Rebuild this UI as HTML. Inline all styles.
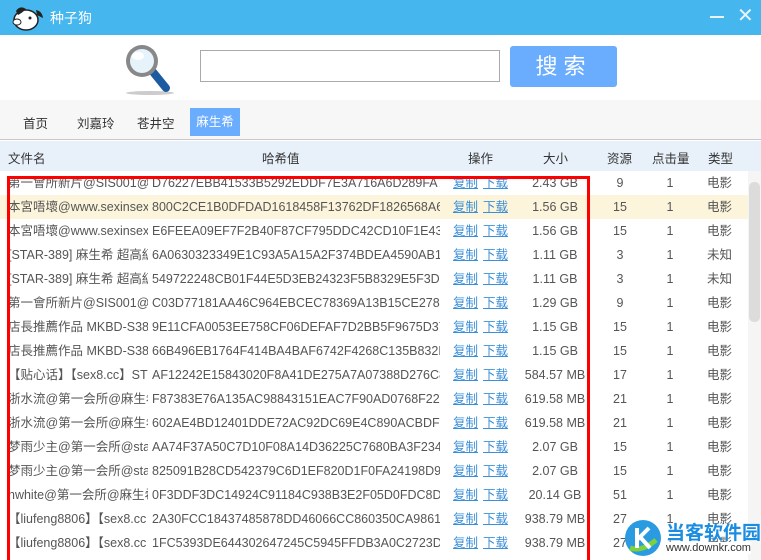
<!DOCTYPE html>
<html style="overflow:hidden;width:761px;height:560px"><head><meta charset="utf-8"><style>
*{margin:0;padding:0;box-sizing:border-box}
body{width:761px;height:560px;overflow:hidden;background:#fff;font-family:"Liberation Sans","Noto Sans CJK SC",sans-serif;font-size:12.5px;color:#555;position:relative}
.a{position:absolute;white-space:nowrap}
.title{left:0;top:0;width:761px;height:35px;background:#45b6ee}
.tabs{left:0;top:100px;width:761px;height:40px;background:#f7f7f7;border-bottom:1px solid #c8c8c8}
.hdr{left:0;top:141px;width:761px;height:30px;background:#e8f1f9}
.row{position:absolute;left:0;width:748px;height:24px;line-height:24px}
.row span{position:absolute;white-space:nowrap;overflow:hidden}
.n{left:8px;width:140px}
.h{left:152px;width:288px}
.o{left:453px;color:#3a8fd8;text-decoration:underline}
.o2{left:483px;color:#3a8fd8;text-decoration:underline}
.s{left:500px;width:110px;text-align:center}
.r{left:600px;width:40px;text-align:center}
.c{left:650px;width:40px;text-align:center}
.t{left:707px}
</style></head><body>
<div class="a title"></div>
<svg class="a" style="left:6px;top:3px" width="40" height="30" viewBox="0 0 40 30">
<ellipse cx="20" cy="17" rx="12" ry="10" fill="#fff" stroke="#222" stroke-width="1.5"/>
<path d="M10 8 Q14 2 20 6 Q16 10 12 12Z" fill="#222"/>
<path d="M30 7 Q36 8 37 15 Q33 13 31 12Z" fill="#222"/>
<ellipse cx="11" cy="19" rx="4" ry="3" fill="#fff" stroke="#222"/>
<circle cx="24" cy="15" r="1.5" fill="#222"/>
</svg>
<div class="a" style="left:50px;top:8px;color:#fff;font-size:14px">种子狗</div>
<div class="a" style="left:710px;top:16px;width:14px;height:2px;background:#e8f4fc"></div>
<div class="a" style="left:737px;top:3px;color:#e8f4fc;font-size:20px">✕</div>
<svg class="a" style="left:122px;top:40px" width="58" height="56" viewBox="0 0 58 56">
<ellipse cx="28" cy="53" rx="24" ry="2" fill="#ccc"/>
<path d="M31 32 L44 48" stroke="#1e5aa0" stroke-width="8" stroke-linecap="round"/>
<circle cx="20" cy="21" r="16" fill="#888"/>
<circle cx="20" cy="21" r="12" fill="#e6f3fb"/>
<ellipse cx="16" cy="16" rx="6" ry="4" fill="#fff"/>
</svg>
<div class="a" style="left:200px;top:50px;width:300px;height:32px;border:1px solid #aaa"></div>
<div class="a" style="left:510px;top:46px;width:107px;height:41px;background:#6aacfd;border-radius:3px;color:#fff;font-size:22px;text-align:center;line-height:41px;letter-spacing:6px">搜索</div>
<div class="a tabs"></div>
<div class="a" style="left:23px;top:113px;color:#333">首页</div>
<div class="a" style="left:77px;top:113px;color:#333">刘嘉玲</div>
<div class="a" style="left:137px;top:113px;color:#333">苍井空</div>
<div class="a" style="left:190px;top:108px;width:50px;height:28px;background:#6aacfd;color:#fff;text-align:center;line-height:28px">麻生希</div>
<div class="a hdr"></div>
<div class="a" style="left:8px;top:148px;color:#333">文件名</div>
<div class="a" style="left:262px;top:148px;color:#333">哈希值</div>
<div class="a" style="left:468px;top:148px;color:#333">操作</div>
<div class="a" style="left:543px;top:148px;color:#333">大小</div>
<div class="a" style="left:607px;top:148px;color:#333">资源</div>
<div class="a" style="left:652px;top:148px;color:#333">点击量</div>
<div class="a" style="left:708px;top:148px;color:#333">类型</div>
<div class="a" style="left:748px;top:171px;width:13px;height:389px;background:#f5f5f5"></div>
<div class="a" style="left:749px;top:182px;width:11px;height:140px;background:#dcdcdc;border-radius:5px"></div>

<div class="row" style="top:171px"><span class="n">第一會所新片@SIS001@(</span><span class="h">D76227EBB41533B5292EDDF7E3A716A6D289FA7B</span><span class="o">复制</span><span class="o2">下载</span><span class="s">2.43 GB</span><span class="r">9</span><span class="c">1</span><span class="t">电影</span></div>
<div class="row" style="top:195px;background:#fcf5dc"><span class="n">本宮唔壞@www.sexinsex.</span><span class="h">800C2CE1B0DFDAD1618458F13762DF1826568A66</span><span class="o">复制</span><span class="o2">下载</span><span class="s">1.56 GB</span><span class="r">15</span><span class="c">1</span><span class="t">电影</span></div>
<div class="row" style="top:219px"><span class="n">本宮唔壞@www.sexinsex.</span><span class="h">E6FEEA09EF7F2B40F87CF795DDC42CD10F1E435F</span><span class="o">复制</span><span class="o2">下载</span><span class="s">1.56 GB</span><span class="r">15</span><span class="c">1</span><span class="t">电影</span></div>
<div class="row" style="top:243px"><span class="n">[STAR-389] 麻生希 超高級</span><span class="h">6A0630323349E1C93A5A15A2F374BDEA4590AB1A</span><span class="o">复制</span><span class="o2">下载</span><span class="s">1.11 GB</span><span class="r">3</span><span class="c">1</span><span class="t">未知</span></div>
<div class="row" style="top:267px"><span class="n">[STAR-389] 麻生希 超高級</span><span class="h">549722248CB01F44E5D3EB24323F5B8329E5F3D5</span><span class="o">复制</span><span class="o2">下载</span><span class="s">1.11 GB</span><span class="r">3</span><span class="c">1</span><span class="t">未知</span></div>
<div class="row" style="top:291px"><span class="n">第一會所新片@SIS001@(</span><span class="h">C03D77181AA46C964EBCEC78369A13B15CE27811</span><span class="o">复制</span><span class="o2">下载</span><span class="s">1.29 GB</span><span class="r">9</span><span class="c">1</span><span class="t">电影</span></div>
<div class="row" style="top:315px"><span class="n">店長推薦作品 MKBD-S38</span><span class="h">9E11CFA0053EE758CF06DEFAF7D2BB5F9675D374</span><span class="o">复制</span><span class="o2">下载</span><span class="s">1.15 GB</span><span class="r">15</span><span class="c">1</span><span class="t">电影</span></div>
<div class="row" style="top:339px"><span class="n">店長推薦作品 MKBD-S38</span><span class="h">66B496EB1764F414BA4BAF6742F4268C135B832E</span><span class="o">复制</span><span class="o2">下载</span><span class="s">1.15 GB</span><span class="r">15</span><span class="c">1</span><span class="t">电影</span></div>
<div class="row" style="top:363px"><span class="n">【贴心话】【sex8.cc】ST</span><span class="h">AF12242E15843020F8A41DE275A7A07388D276C8</span><span class="o">复制</span><span class="o2">下载</span><span class="s">584.57 MB</span><span class="r">17</span><span class="c">1</span><span class="t">电影</span></div>
<div class="row" style="top:387px"><span class="n">浙水流@第一会所@麻生希</span><span class="h">F87383E76A135AC98843151EAC7F90AD0768F22C</span><span class="o">复制</span><span class="o2">下载</span><span class="s">619.58 MB</span><span class="r">21</span><span class="c">1</span><span class="t">电影</span></div>
<div class="row" style="top:411px"><span class="n">浙水流@第一会所@麻生希</span><span class="h">602AE4BD12401DDE72AC92DC69E4C890ACBDFF9</span><span class="o">复制</span><span class="o2">下载</span><span class="s">619.58 MB</span><span class="r">21</span><span class="c">1</span><span class="t">电影</span></div>
<div class="row" style="top:435px"><span class="n">梦雨少主@第一会所@star</span><span class="h">AA74F37A50C7D10F08A14D36225C7680BA3F2346</span><span class="o">复制</span><span class="o2">下载</span><span class="s">2.07 GB</span><span class="r">15</span><span class="c">1</span><span class="t">电影</span></div>
<div class="row" style="top:459px"><span class="n">梦雨少主@第一会所@star</span><span class="h">825091B28CD542379C6D1EF820D1F0FA24198D93</span><span class="o">复制</span><span class="o2">下载</span><span class="s">2.07 GB</span><span class="r">15</span><span class="c">1</span><span class="t">电影</span></div>
<div class="row" style="top:483px"><span class="n">hwhite@第一会所@麻生希</span><span class="h">0F3DDF3DC14924C91184C938B3E2F05D0FDC8DD</span><span class="o">复制</span><span class="o2">下载</span><span class="s">20.14 GB</span><span class="r">51</span><span class="c">1</span><span class="t">电影</span></div>
<div class="row" style="top:507px"><span class="n">【liufeng8806】【sex8.cc</span><span class="h">2A30FCC18437485878DD46066CC860350CA98615</span><span class="o">复制</span><span class="o2">下载</span><span class="s">938.79 MB</span><span class="r">27</span><span class="c">1</span><span class="t">电影</span></div>
<div class="row" style="top:531px"><span class="n">【liufeng8806】【sex8.cc</span><span class="h">1FC5393DE644302647245C5945FFDB3A0C2723D3</span><span class="o">复制</span><span class="o2">下载</span><span class="s">938.79 MB</span><span class="r">27</span><span class="c">1</span><span class="t">电影</span></div>

<div class="a" style="left:7px;top:176px;width:583px;height:384px;border:3px solid #f00;border-bottom:none"></div>
<svg class="a" style="left:622px;top:518px" width="42" height="40" viewBox="0 0 42 40"><circle cx="21" cy="20" r="18" fill="#2a9be0"/><path d="M8 30 Q20 34 34 22" stroke="#7fd13b" stroke-width="5" fill="none"/><path d="M15 10 L15 30 M15 22 L27 10 M19 20 L28 30" stroke="#fff" stroke-width="4" fill="none"/></svg>
<div class="a" style="left:666px;top:518px;color:#1b8de0;font-size:19px;font-weight:bold;text-shadow:0 0 2px #fff">当客软件园</div>
<div class="a" style="left:666px;top:542px;color:#333;font-size:11px;background:#fff">www.downkr.com</div>
</body></html>
